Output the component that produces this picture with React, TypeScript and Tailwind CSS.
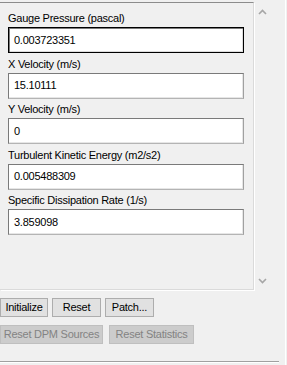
import React from "react";

const fields = [
    { label: "Gauge Pressure (pascal)", value: "0.003723351", focused: true },
    { label: "X Velocity (m/s)", value: "15.10111" },
    { label: "Y Velocity (m/s)", value: "0" },
    { label: "Turbulent Kinetic Energy (m2/s2)", value: "0.005488309" },
    { label: "Specific Dissipation Rate (1/s)", value: "3.859098" },
];

const Chevron = ({ down }: { down?: boolean }) => (
    <svg width="9" height="6" viewBox="0 0 9 6" className={down ? "rotate-180" : ""}>
        <polyline points="1,5 4.5,1.5 8,5" fill="none" stroke="#a6a6a6" strokeWidth="1.6" />
    </svg>
);

const Field = ({ label, value, focused }: { label: string; value: string; focused?: boolean }) => (
    <div className="flex flex-col">
        <label className="h-[16px] leading-[14px] text-black">{label}</label>
        <div
            className={
                focused
                    ? "w-[236px] h-[26px] flex items-center pl-[5px] bg-white border border-black shadow-[inset_1px_1px_0_#7a7a7a,inset_-1px_-1px_0_#dcdcdc]"
                    : "w-[236px] h-[26px] flex items-center pl-[5px] bg-white border border-t-[#7a7a7a] border-l-[#7a7a7a] border-r-[#a0a0a0] border-b-[#b4b4b4] shadow-[inset_-1px_-1px_0_#e6e6e6]"
            }
        >
            {value}
        </div>
    </div>
);

const Btn = ({ children, w, disabled }: { children: React.ReactNode; w: string; disabled?: boolean }) => (
    <button
        className={
            disabled
                ? `${w} h-[19px] flex items-center justify-center bg-[#cccccc] border border-[#bfbfbf] text-[#838383]`
                : `${w} h-[19px] flex items-center justify-center bg-[#e1e1e1] border border-[#adadad] text-black`
        }
    >
        {children}
    </button>
);

export default function App() {
    return (
        <div
            className="w-[287px] h-[365px] overflow-hidden bg-[#f0f0f0] flex text-[11px] tracking-[-0.25px]"
            style={{ fontFamily: '"Liberation Sans", Arial, sans-serif' }}
        >
            <div className="w-[285px] flex flex-col">
                {/* scroll panel */}
                <div className="flex">
                    <div className="mt-[2px] w-[254px] h-[288px] border-t border-t-[#8c8c8c] border-r border-b border-r-[#dadada] border-b-[#dadada] shadow-[1px_1px_0_#ffffff] pl-[8px] pt-[8px] flex flex-col gap-[3.5px]">
                        {fields.map((f) => (
                            <Field key={f.label} {...f} />
                        ))}
                    </div>
                    <div className="w-[17px] h-[290px] flex flex-col justify-between items-center pt-[9px] pb-[6px]">
                        <Chevron />
                        <Chevron down />
                    </div>
                </div>

                {/* buttons */}
                <div className="mt-[8px] flex flex-col gap-[8px]">
                    <div className="flex gap-[4px]">
                        <Btn w="w-[48px]">Initialize</Btn>
                        <Btn w="w-[49px]">Reset</Btn>
                        <Btn w="w-[49px]">Patch...</Btn>
                    </div>
                    <div className="flex gap-[6px]">
                        <Btn w="w-[103px]" disabled>Reset DPM Sources</Btn>
                        <Btn w="w-[85px]" disabled>Reset Statistics</Btn>
                    </div>
                </div>

                <div className="mt-auto mb-[2px] w-[279px] border-t border-t-[#a0a0a0] border-b border-b-white" />
            </div>
            <div className="w-[2px] border-l border-l-white" />
        </div>
    );
}
